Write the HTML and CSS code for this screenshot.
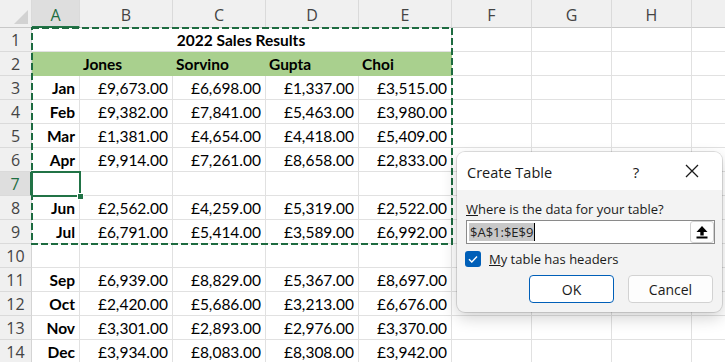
FILE: index.html
```html
<!DOCTYPE html>
<html lang="en">
<head>
    <meta charset="UTF-8">
    <meta name="viewport" content="width=device-width, initial-scale=1.0">
    <title>Create Table</title>
    <link rel="stylesheet" href="styles.css">
</head>
<body>
    <div class="sheet">
        <table class="grid">
            <colgroup>
                <col class="c-head"><col class="c-a"><col class="c-num"><col class="c-num"><col class="c-num"><col class="c-num"><col class="c-free"><col class="c-free"><col class="c-free"><col class="c-rest">
            </colgroup>
            <tr class="col-heads">
                <th class="corner"><span class="corner-tri"></span></th>
                <th class="picked">A</th><th>B</th><th>C</th><th>D</th><th>E</th><th>F</th><th>G</th><th>H</th><th></th>
            </tr>
            <tr><th class="row-num">1</th><td colspan="5" class="title">2022 Sales Results</td><td></td><td></td><td></td><td></td></tr>
            <tr><th class="row-num">2</th><td class="fill"></td><td class="fill name">Jones</td><td class="fill name">Sorvino</td><td class="fill name">Gupta</td><td class="fill name">Choi</td><td></td><td></td><td></td><td></td></tr>
            <tr><th class="row-num">3</th><td class="month">Jan</td><td>£9,673.00</td><td>£6,698.00</td><td>£1,337.00</td><td>£3,515.00</td><td></td><td></td><td></td><td></td></tr>
            <tr><th class="row-num">4</th><td class="month">Feb</td><td>£9,382.00</td><td>£7,841.00</td><td>£5,463.00</td><td>£3,980.00</td><td></td><td></td><td></td><td></td></tr>
            <tr><th class="row-num">5</th><td class="month">Mar</td><td>£1,381.00</td><td>£4,654.00</td><td>£4,418.00</td><td>£5,409.00</td><td></td><td></td><td></td><td></td></tr>
            <tr><th class="row-num">6</th><td class="month">Apr</td><td>£9,914.00</td><td>£7,261.00</td><td>£8,658.00</td><td>£2,833.00</td><td></td><td></td><td></td><td></td></tr>
            <tr><th class="row-num picked-row">7</th><td></td><td></td><td></td><td></td><td></td><td></td><td></td><td></td><td></td></tr>
            <tr><th class="row-num">8</th><td class="month">Jun</td><td>£2,562.00</td><td>£4,259.00</td><td>£5,319.00</td><td>£2,522.00</td><td></td><td></td><td></td><td></td></tr>
            <tr><th class="row-num">9</th><td class="month">Jul</td><td>£6,791.00</td><td>£5,414.00</td><td>£3,589.00</td><td>£6,992.00</td><td></td><td></td><td></td><td></td></tr>
            <tr><th class="row-num">10</th><td></td><td></td><td></td><td></td><td></td><td></td><td></td><td></td><td></td></tr>
            <tr><th class="row-num">11</th><td class="month">Sep</td><td>£6,939.00</td><td>£8,829.00</td><td>£5,367.00</td><td>£8,697.00</td><td></td><td></td><td></td><td></td></tr>
            <tr><th class="row-num">12</th><td class="month">Oct</td><td>£2,420.00</td><td>£5,686.00</td><td>£3,213.00</td><td>£6,676.00</td><td></td><td></td><td></td><td></td></tr>
            <tr><th class="row-num">13</th><td class="month">Nov</td><td>£3,301.00</td><td>£2,893.00</td><td>£2,976.00</td><td>£3,370.00</td><td></td><td></td><td></td><td></td></tr>
            <tr><th class="row-num">14</th><td class="month">Dec</td><td>£3,934.00</td><td>£8,083.00</td><td>£8,308.00</td><td>£3,942.00</td><td></td><td></td><td></td><td></td></tr>
        </table>

        <!-- marching ants round A1:E9 -->
        <svg class="marquee" width="422" height="218" viewBox="0 0 422 218">
            <rect x="1" y="1" width="420" height="216" fill="none" stroke="#1d6b40" stroke-width="2" stroke-dasharray="7 3"/>
        </svg>
        <div class="active-cell"><span class="fill-handle"></span></div>

        <div class="dialog">
            <div class="dialog-title">
                <span class="title-text">Create Table</span>
                <span class="help">?</span>
                <svg class="close" width="14" height="14" viewBox="0 0 14 14">
                    <path d="M1 1 L13 13 M13 1 L1 13" stroke="#1a1a1a" stroke-width="1.3" fill="none"/>
                </svg>
            </div>
            <div class="dialog-body">
                <div class="label"><u>W</u>here is the data for your table?</div>
                <div class="range-box">
                    <span class="range-text">$A$1:$E$9</span><span class="caret"></span>
                    <span class="collapse-btn">
                        <svg width="12" height="14" viewBox="0 0 12 14">
                            <polygon points="6,1 11.5,7 0.5,7" fill="#000"/>
                            <rect x="4.3" y="6.5" width="3.4" height="4" fill="#000"/>
                            <rect x="0.5" y="11.5" width="11" height="2" fill="#000"/>
                        </svg>
                    </span>
                </div>
                <div class="check-row">
                    <span class="checkbox">
                        <svg width="16" height="16" viewBox="0 0 16 16">
                            <polyline points="4,8.3 6.8,11 12,5.5" fill="none" stroke="#fff" stroke-width="1.4"/>
                        </svg>
                    </span>
                    <span><u>M</u>y table has headers</span>
                </div>
                <div class="buttons">
                    <button class="btn primary">OK</button>
                    <button class="btn">Cancel</button>
                </div>
            </div>
        </div>
    </div>
</body>
</html>
```

FILE: styles.css
```css
body {
    margin: 0;
    background-color: #fff;
    overflow: hidden;
}
.sheet {
    position: relative;
    width: 725px;
    height: 362px;
    overflow: hidden;
}
.grid {
    table-layout: fixed;
    width: 726px;
    border-collapse: separate;
    border-spacing: 0;
    font-family: Lato, "Liberation Sans", sans-serif;
    font-size: 15.5px;
    color: #000;
}
.c-head { width: 32px; }
.c-a { width: 48px; }
.c-num { width: 93px; }
.c-free { width: 80px; }
.c-rest { width: 34px; }

tr {
    height: 24px;
}
td {
    padding: 0 4px 0 3px;
    border-right: 1px solid #e1e1e1;
    border-bottom: 1px solid #e1e1e1;
    text-align: right;
    white-space: nowrap;
    overflow: hidden;
    line-height: 20px;
}
th {
    padding: 0;
    font-family: "Open Sans", "Noto Sans", sans-serif;
    font-weight: normal;
    color: #444;
    background-color: #f0f0f0;
    border-right: 1px solid #d4d4d4;
    border-bottom: 1px solid #d4d4d4;
}
.col-heads {
    height: 28px;
}
.col-heads th {
    font-size: 16px;
    padding-top: 3px;
    border-right-color: #dadada;
    border-bottom: 1px solid #c8c8c8;
}
.col-heads th.picked {
    background-color: #dedede;
    color: #1e6e42;
    border-bottom: 2px solid #217346;
}
.corner {
    position: relative;
}
.corner-tri {
    position: absolute;
    right: 3px;
    bottom: 3px;
    width: 0;
    height: 0;
    border-left: 14px solid transparent;
    border-bottom: 14px solid #d2d2d2;
}
.row-num {
    font-size: 16px;
    text-align: center;
    border-bottom-color: #dadada;
}
.row-num.picked-row {
    background-color: #dedede;
    color: #1e6e42;
    border-right: 2px solid #217346;
}
.title {
    text-align: center;
    font-weight: bold;
}
.fill {
    background-color: #a9d08e;
    border-color: #a9d08e;
}
.name {
    text-align: left;
    font-weight: bold;
}
.month {
    font-weight: bold;
}
.marquee {
    position: absolute;
    left: 31px;
    top: 27px;
}
.active-cell {
    position: absolute;
    left: 31px;
    top: 171px;
    width: 46px;
    height: 22px;
    border: 2px solid #217346;
}
.fill-handle {
    position: absolute;
    right: -5px;
    bottom: -5px;
    width: 5px;
    height: 5px;
    background-color: #217346;
    border: 1px solid #fff;
}

/* Create Table dialog */
.dialog {
    position: absolute;
    left: 457px;
    top: 152px;
    width: 265px;
    height: 160px;
    border-radius: 8px;
    overflow: hidden;
    background-color: #f3f3f3;
    box-shadow: 0 0 0 1px rgba(0, 0, 0, 0.12), 0 6px 16px rgba(0, 0, 0, 0.18);
    font-family: "Open Sans", "Noto Sans", sans-serif;
    color: #1a1a1a;
}
.dialog-title {
    display: flex;
    align-items: center;
    height: 38px;
    padding: 0 0 0 10px;
    background-color: #fff;
}
.title-text {
    flex: 1;
    font-size: 14.5px;
    padding-top: 2px;
}
.help {
    width: 20px;
    text-align: center;
    font-size: 15px;
    margin-right: 39px;
    padding-top: 2px;
}
.close {
    margin-right: 23px;
}
.dialog-body {
    padding: 10px 9px 9px 9px;
    font-size: 13px;
}
.label {
    line-height: 18px;
}
.range-box {
    position: relative;
    display: flex;
    align-items: center;
    margin-top: 2px;
    width: 247px;
    height: 22px;
    background-color: #fff;
    border: 1px solid #8a8a8a;
}
.range-text {
    margin-left: 2px;
    padding: 0 1px;
    line-height: 18px;
    background-color: #c8c8c8;
    color: #222;
}
.caret {
    width: 1px;
    height: 18px;
    background-color: #000;
}
.collapse-btn {
    position: absolute;
    right: 0;
    top: 0;
    width: 22px;
    height: 20px;
    display: flex;
    align-items: center;
    justify-content: center;
    border: 1px solid #d0d0d0;
    border-radius: 3px;
    background-color: #fdfdfd;
}
.check-row {
    display: flex;
    align-items: center;
    gap: 8px;
    margin-top: 7px;
    margin-left: -1px;
    height: 16px;
}
.checkbox {
    width: 16px;
    height: 16px;
    border-radius: 3px;
    background-color: #005fb8;
    display: flex;
}
.buttons {
    display: flex;
    justify-content: flex-end;
    gap: 14px;
    margin-top: 8px;
}
.btn {
    width: 85px;
    height: 28px;
    font-family: "Open Sans", "Noto Sans", sans-serif;
    font-size: 14px;
    color: #1a1a1a;
    background-color: #fdfdfd;
    border: 1px solid #d2d2d2;
    border-radius: 4px;
    padding: 0;
}
.btn.primary {
    border: 1px solid #005fb8;
    background-color: #fff;
}
```
